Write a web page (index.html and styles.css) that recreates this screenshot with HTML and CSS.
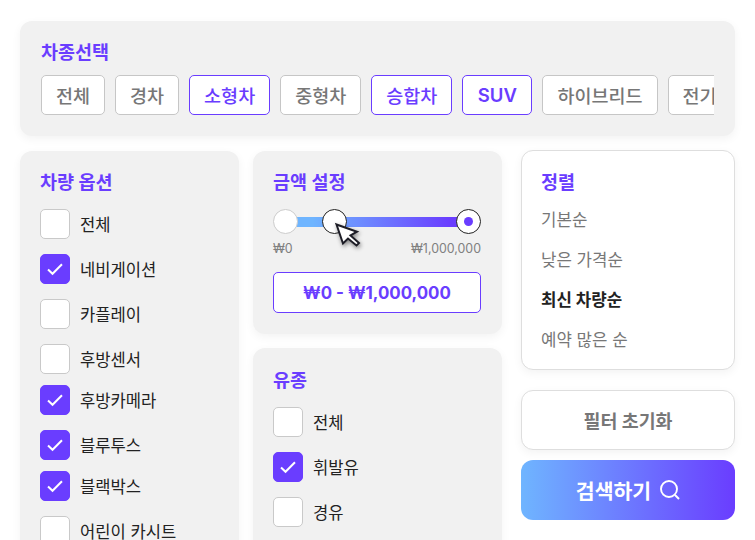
FILE: index.html
```html
<!DOCTYPE html>
<html lang="ko">
  <head>
    <meta charset="utf-8">
    <title>차량 검색 필터</title>
    <link rel="stylesheet" href="styles.css">
  </head>
<body>
  <div class="layout">

    <div class="panel typepanel">
      <div class="paneltitle">차종선택</div>
      <div class="chips">
        <button class="chip">전체</button>
        <button class="chip">경차</button>
        <button class="chip on">소형차</button>
        <button class="chip">중형차</button>
        <button class="chip on">승합차</button>
        <button class="chip on latin">SUV</button>
        <button class="chip">하이브리드</button>
        <button class="chip">전기차</button>
      </div>
    </div>

    <div class="columns">

      <div class="panel optionpanel">
        <div class="paneltitle">차량 옵션</div>
        <div class="checks">
          <div class="check"><span class="box"></span>전체</div>
          <div class="check"><span class="box checked"><svg viewBox="0 0 16 16"><path d="M1.8 8.4l4 3.8 8.4-8.4"/></svg></span>네비게이션</div>
          <div class="check"><span class="box"></span>카플레이</div>
          <div class="check"><span class="box"></span>후방센서</div>
          <div class="check tight"><span class="box checked"><svg viewBox="0 0 16 16"><path d="M1.8 8.4l4 3.8 8.4-8.4"/></svg></span>후방카메라</div>
          <div class="check"><span class="box checked"><svg viewBox="0 0 16 16"><path d="M1.8 8.4l4 3.8 8.4-8.4"/></svg></span>블루투스</div>
          <div class="check tight"><span class="box checked"><svg viewBox="0 0 16 16"><path d="M1.8 8.4l4 3.8 8.4-8.4"/></svg></span>블랙박스</div>
          <div class="check"><span class="box"></span>어린이 카시트</div>
        </div>
      </div>

      <div class="middle">
        <div class="panel pricepanel">
          <div class="paneltitle">금액 설정</div>
          <div class="slider">
            <div class="track"></div>
            <span class="thumb thumbmin"></span>
            <span class="thumb thumbhover"></span>
            <span class="thumb thumbmax"><i></i></span>
            <svg class="cursor" viewBox="0 0 28 28">
              <path d="M4.5 5.5l20.500 7.200-6.500 3.800 8.500 7.500-2.500 2.500-8.500-7-5 5z"/>
            </svg>
          </div>
          <div class="pricelabels"><span>₩0</span><span>₩1,000,000</span></div>
          <div class="pricebox">₩0 - ₩1,000,000</div>
        </div>

        <div class="panel fuelpanel">
          <div class="paneltitle">유종</div>
          <div class="checks">
            <div class="check"><span class="box"></span>전체</div>
            <div class="check"><span class="box checked"><svg viewBox="0 0 16 16"><path d="M1.8 8.4l4 3.8 8.4-8.4"/></svg></span>휘발유</div>
            <div class="check"><span class="box"></span>경유</div>
            <div class="check"><span class="box"></span>전기</div>
          </div>
        </div>
      </div>

      <div class="side">
        <div class="sortcard">
          <div class="paneltitle">정렬</div>
          <div class="sortitem">기본순</div>
          <div class="sortitem">낮은 가격순</div>
          <div class="sortitem current">최신 차량순</div>
          <div class="sortitem">예약 많은 순</div>
        </div>
        <button class="resetbutton">필터 초기화</button>
        <button class="searchbutton">검색하기
          <svg viewBox="0 0 20 20"><circle cx="9" cy="9" r="8"/><path d="M15 15l4 4"/></svg>
        </button>
      </div>

    </div>
  </div>
</body>
</html>
```

FILE: styles.css
```css
body, html {margin: 0; padding: 0; background-color: white; overflow: hidden; height: 540px;}

body {
  font-family: Inter, "Noto Sans CJK KR", sans-serif;
  color: #222;
}

button {font-family: inherit;}

.layout {
  padding: 21px 20px 0 20px;
}

.panel {
  background-color: #f1f1f1;
  border-radius: 12px;
  box-shadow: 0 3px 10px rgba(0, 0, 0, 0.05);
  box-sizing: border-box;
}

.paneltitle {
  color: #6a3dff;
  font-size: 18.5px;
  font-weight: 700;
  line-height: 22px;
}

.typepanel {
  width: 715px;
  height: 115px;
  padding: 20px 21px;
}

.chips {
  display: flex;
  gap: 10px;
  margin-top: 12px;
  overflow: hidden;
}

.chip {
  flex-shrink: 0;
  height: 40px;
  padding: 0 14px;
  background-color: white;
  border: 1px solid #c6c6c6;
  border-radius: 5px;
  color: #777;
  font-size: 18.5px;
  font-weight: 500;
}

.chip.on {
  border-color: #6a3dff;
  color: #6a3dff;
}

.chip.latin {
  padding: 0 14.5px;
  font-weight: 600;
}

.columns {
  display: flex;
  align-items: flex-start;
  margin-top: 15px;
}

.optionpanel {
  width: 219px;
  height: 500px;
  padding: 20px;
  flex-shrink: 0;
}

.checks {
  display: flex;
  flex-direction: column;
  gap: 15px;
  margin-top: 16px;
}

.check {
  display: flex;
  align-items: center;
  gap: 10px;
  height: 30px;
  font-size: 16.6px;
}

.check.tight {margin-top: -4px;}

.box {
  display: flex;
  align-items: center;
  justify-content: center;
  box-sizing: border-box;
  width: 30px;
  height: 30px;
  background-color: white;
  border: 1px solid #c9c9c9;
  border-radius: 5px;
}

.box.checked {
  background-color: #6a3dff;
  border-color: #6a3dff;
}

.box svg {
  width: 18px;
  height: 18px;
  fill: none;
  stroke: white;
  stroke-width: 1.8;
}

.middle {
  display: flex;
  flex-direction: column;
  gap: 14px;
  width: 249px;
  margin-left: 14px;
  flex-shrink: 0;
}

.pricepanel {
  height: 183px;
  padding: 20px 21px 20px 20px;
}

.slider {
  position: relative;
  height: 24px;
  margin-top: 16px;
}

.track {
  margin: 8px 12px 0 12px;
  height: 10px;
  position: absolute;
  left: 0;
  right: 0;
  background: linear-gradient(90deg, #6fb5ff 15%, #6a3dff 90%);
}

.thumb {
  position: absolute;
  top: 0;
  box-sizing: border-box;
  width: 25px;
  height: 25px;
  background-color: white;
  border: 1px solid #222;
  border-radius: 50%;
}

.thumbmin {left: 0; border-color: #ccc;}
.thumbhover {left: 49px;}

.thumbmax {
  right: 0;
  display: flex;
  align-items: center;
  justify-content: center;
}

.thumbmax i {
  width: 9px;
  height: 9px;
  background-color: #6a3dff;
  border-radius: 50%;
}

.cursor {
  position: absolute;
  left: 59px;
  top: 10px;
  width: 28px;
  height: 28px;
  overflow: visible;
  filter: drop-shadow(1px 2px 2px rgba(0, 0, 0, 0.45));
}

.cursor path {
  fill: white;
  stroke: #1d1d26;
  stroke-width: 2;
  stroke-linejoin: miter;
}

.pricelabels {
  display: flex;
  justify-content: space-between;
  margin-top: 8px;
  color: #808080;
  font-size: 12.4px;
  line-height: 16px;
}

.pricebox {
  display: flex;
  align-items: center;
  justify-content: center;
  height: 41px;
  margin-top: 15px;
  box-sizing: border-box;
  background-color: white;
  border: 1px solid #6a3dff;
  border-radius: 5px;
  color: #6a3dff;
  font-size: 16.9px;
  font-weight: 700;
}

.fuelpanel {
  height: 300px;
  padding: 21px 20px 20px 20px;
}

.side {
  display: flex;
  flex-direction: column;
  width: 214px;
  margin-left: 19px;
  margin-top: -1px;
  flex-shrink: 0;
}

.sortcard {
  box-sizing: border-box;
  height: 220px;
  padding: 20px 19px;
  background-color: white;
  border: 1px solid #dedede;
  border-radius: 12px;
  box-shadow: 0 3px 10px rgba(0, 0, 0, 0.05);
}

.sortitem {
  height: 40px;
  line-height: 40px;
  color: #777;
  font-size: 16.8px;
}

.paneltitle + .sortitem {margin-top: 7px;}

.sortitem.current {
  color: #222;
  font-weight: 700;
}

.resetbutton {
  height: 60px;
  margin-top: 20px;
  background-color: white;
  border: 1px solid #dedede;
  border-radius: 12px;
  box-shadow: 0 3px 10px rgba(0, 0, 0, 0.05);
  color: #777;
  font-size: 18.4px;
  font-weight: 700;
}

.searchbutton {
  display: flex;
  align-items: center;
  justify-content: center;
  gap: 9px;
  height: 60px;
  margin-top: 10px;
  background: linear-gradient(90deg, #6fb5ff 0%, #6a3dff 100%);
  border: none;
  border-radius: 12px;
  color: white;
  font-size: 20.5px;
  font-weight: 700;
}

.searchbutton svg {
  width: 20px;
  height: 20px;
  fill: none;
  stroke: white;
  stroke-width: 1.9;
}
```
